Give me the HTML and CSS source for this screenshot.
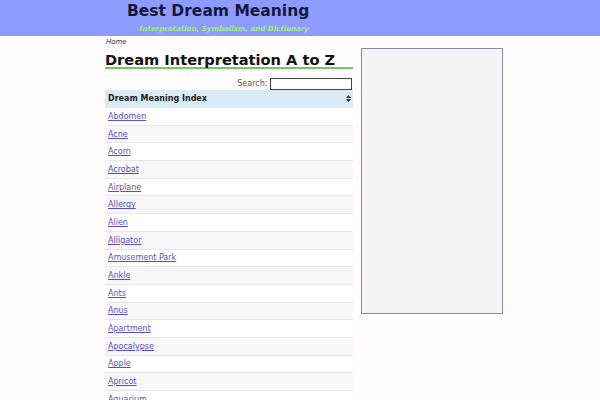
FILE: index.html
```html
<!DOCTYPE html>
<html lang="en">
<head>
    <meta charset="UTF-8">
    <meta name="viewport" content="width=device-width, initial-scale=1.0">
    <title>Best Dream Meaning</title>
    <link rel="stylesheet" href="styles.css">
</head>
<body>

<header>
    <div class="brand">
        <h1>Best Dream Meaning</h1>
        <p class="tagline">Interpretation, Symbolism, and Dictionary</p>
    </div>
</header>

<div class="wrap">
    <div class="main">
        <div class="crumbs"><a href="#">Home</a></div>
        <h2>Dream Interpretation A to Z</h2>

        <div class="search">
            <label>Search: <input type="text"></label>
        </div>

        <table class="index">
            <tr>
                <th>Dream Meaning Index <span class="sort"><svg width="5" height="7" viewBox="0 0 5 7"><path d="M2.5 0L5 3H0z M0 4h5L2.5 7z" fill="#333"/></svg></span></th>
            </tr>
            <tr><td><a href="#">Abdomen</a></td></tr>
            <tr><td><a href="#">Acne</a></td></tr>
            <tr><td><a href="#">Acorn</a></td></tr>
            <tr><td><a href="#">Acrobat</a></td></tr>
            <tr><td><a href="#">Airplane</a></td></tr>
            <tr><td><a href="#">Allergy</a></td></tr>
            <tr><td><a href="#">Alien</a></td></tr>
            <tr><td><a href="#">Alligator</a></td></tr>
            <tr><td><a href="#">Amusement Park</a></td></tr>
            <tr><td><a href="#">Ankle</a></td></tr>
            <tr><td><a href="#">Ants</a></td></tr>
            <tr><td><a href="#">Anus</a></td></tr>
            <tr><td><a href="#">Apartment</a></td></tr>
            <tr><td><a href="#">Apocalypse</a></td></tr>
            <tr><td><a href="#">Apple</a></td></tr>
            <tr><td><a href="#">Apricot</a></td></tr>
            <tr><td><a href="#">Aquarium</a></td></tr>
        </table>
    </div>

    <aside class="side"></aside>
</div>

</body>
</html>
```

FILE: styles.css
```css
body {
    margin: 0;
    font-family: 'DejaVu Sans', Verdana, sans-serif;
    background-color: #fefcfc;
    color: #222;
}

header {
    background-color: #8f9cff;
    height: 36px;
}

.brand {
    width: 182px;
    margin-left: 127px;
    padding-top: 1px;
}

.brand h1 {
    margin: 0;
    font-size: 15.5px;
    line-height: 20px;
    font-weight: bold;
    color: #17173d;
    white-space: nowrap;
}

.brand .tagline {
    margin: 3px 0 0;
    font-size: 7.1px;
    line-height: 9px;
    font-weight: bold;
    font-style: italic;
    color: #9ff06e;
    text-align: right;
    white-space: nowrap;
}

.wrap {
    display: flex;
    align-items: flex-start;
    gap: 8px;
    margin-left: 105px;
}

.main {
    width: 248px;
}

.crumbs {
    padding: 2px 0 0 1px;
    font-size: 7px;
    line-height: 8px;
}

.crumbs a {
    color: #333;
    font-style: italic;
    text-decoration: none;
}

h2 {
    margin: 6px 0 0;
    padding-bottom: 0;
    font-size: 14.6px;
    line-height: 15px;
    color: #111;
    border-bottom: 2px solid #6ccb5f;
}

.search {
    margin-top: 9px;
    height: 12px;
    text-align: right;
    font-size: 8px;
    line-height: 12px;
    color: #555;
}

.search input {
    width: 80px;
    height: 10px;
    margin: 0 1px 0 0;
    padding: 0;
    border: 1px solid #444;
    vertical-align: top;
    background: #fff;
}

table.index {
    width: 100%;
    margin-top: 0;
    border-collapse: collapse;
    font-size: 8px;
}

table.index th {
    background-color: #d8ebf7;
    text-align: left;
    height: 17px;
    padding: 0 3px;
    font-weight: bold;
    color: #222;
    position: relative;
}

.sort {
    position: absolute;
    right: 2px;
    top: 5px;
    line-height: 0;
}

table.index td {
    height: 16.7px;
    padding: 0 3px;
    border-top: 1px solid #e6e6e6;
    background-color: #fff;
}

table.index tr:nth-child(odd) td {
    background-color: #f7f7f7;
}

table.index td a {
    color: #5a4ec8;
}

.side {
    width: 140px;
    height: 264px;
    margin-top: 12px;
    background-color: #f4f4f4;
    border: 1px solid #8a8aa8;
}
```
